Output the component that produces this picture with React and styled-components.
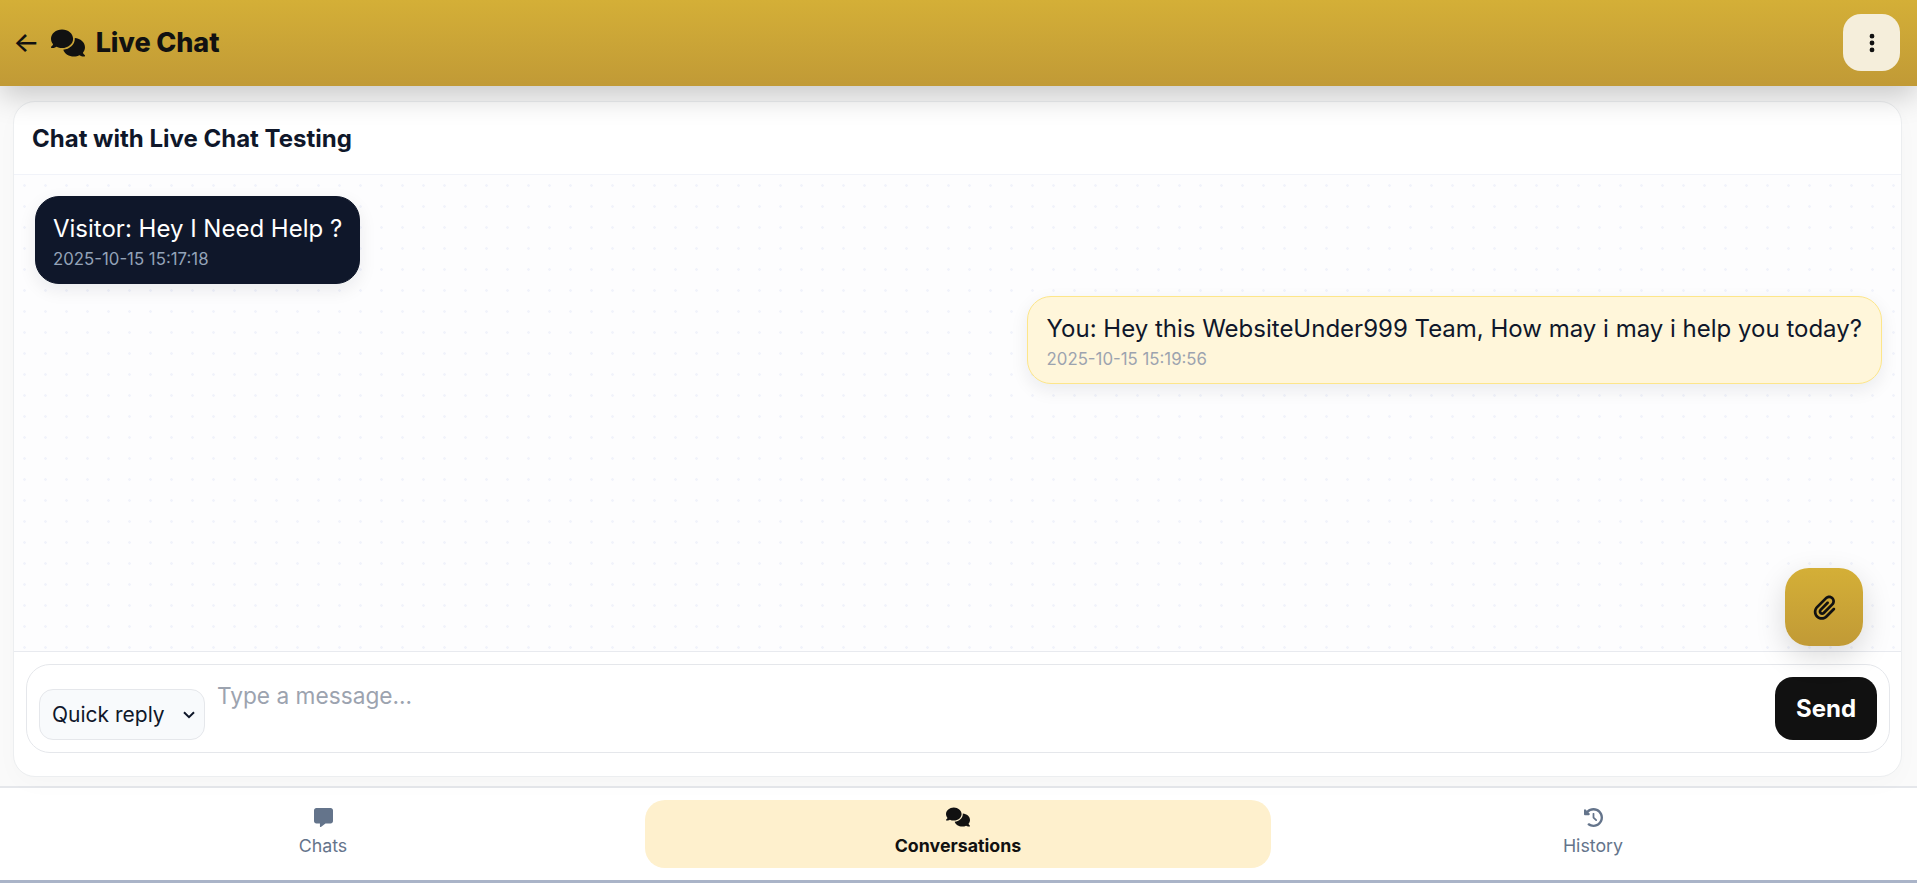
import React from 'react';
import styled, { createGlobalStyle } from 'styled-components';
import { FaComments, FaEllipsisVertical, FaPaperclip, FaMessage, FaClockRotateLeft } from 'react-icons/fa6';

const chevron = encodeURIComponent(
  '<svg xmlns="http://www.w3.org/2000/svg" width="12" height="8" viewBox="0 0 12 8"><path d="M1 1.2l5 5 5-5" fill="none" stroke="#0f172a" stroke-width="2"/></svg>'
);

const GlobalStyle = createGlobalStyle`
  * { box-sizing: border-box; }
  html, body { margin: 0; height: 100%; }
  body {
    background: #fafafa;
    font-family: Inter, "Liberation Sans", sans-serif;
    color: #0f172a;
    overflow: hidden;
  }
`;

const Page = styled.div`
  height: 883px;
  display: flex;
  flex-direction: column;
  border-bottom: 3px solid #aab4c8;
`;

const Header = styled.header`
  position: relative;
  z-index: 2;
  height: 86px;
  flex: none;
  padding: 0 17px 1px 13px;
  display: flex;
  align-items: center;
  justify-content: space-between;
  background: linear-gradient(180deg, #d4af37, #c19a36);
  box-shadow: 0 10px 30px rgba(0, 0, 0, 0.2);
  color: #111111;
`;

const Title = styled.div`
  display: flex;
  align-items: center;
  gap: 11px;
  font-size: 27px;
  font-weight: 800;
  letter-spacing: -0.1px;
`;

const BackArrow = styled.span`
  font-size: 28px;
  font-weight: 500;
  line-height: 1;
  margin-top: -2px;
`;

const MenuButton = styled.button`
  width: 57px;
  height: 57px;
  border: 0;
  border-radius: 18px;
  background: #f5eedb;
  color: #111111;
  font-size: 22px;
  display: flex;
  align-items: center;
  justify-content: center;
`;

const Main = styled.main`
  flex: 1;
  min-height: 0;
  padding: 15px 15px 9px 13px;
`;

const Card = styled.section`
  position: relative;
  height: 100%;
  display: flex;
  flex-direction: column;
  background: #ffffff;
  border: 1px solid #eceef0;
  border-radius: 22px;
  overflow: hidden;
  box-shadow: 0 8px 24px rgba(15, 23, 42, 0.02);
`;

const CardTitle = styled.div`
  height: 73px;
  flex: none;
  padding: 0 18px;
  display: flex;
  align-items: center;
  font-size: 24px;
  font-weight: 700;
  border-bottom: 1px solid #f1f3f9;
`;

const Messages = styled.div`
  flex: 1;
  min-height: 0;
  padding: 21px 19px 0 21px;
  display: flex;
  flex-direction: column;
  gap: 12px;
  background-color: #fdfdfe;
  background-image: radial-gradient(circle, #f1f3fb 1px, transparent 1.6px);
  background-size: 21px 21px;
`;

const Bubble = styled.div`
  align-self: ${(p) => (p.$mine ? 'flex-end' : 'flex-start')};
  padding: 16px ${(p) => (p.$mine ? '19px' : '17px')} 14px;
  border-radius: 24px;
  border: 1px solid ${(p) => (p.$mine ? '#fde68a' : '#0f172a')};
  background: ${(p) => (p.$mine ? '#fff6da' : '#0f172a')};
  color: ${(p) => (p.$mine ? '#0f172a' : '#ffffff')};
  box-shadow: 0 6px 18px rgba(15, 23, 42, 0.08);
`;

const BubbleText = styled.div`
  font-size: 24px;
  line-height: 32px;
`;

const Stamp = styled.div`
  margin-top: 4px;
  font-size: 16.8px;
  line-height: 20px;
  color: ${(p) => (p.$mine ? '#9ca3af' : '#94a3b8')};
`;

const AttachButton = styled.button`
  position: absolute;
  right: 38px;
  bottom: 130px;
  width: 78px;
  height: 78px;
  border: 0;
  border-radius: 24px;
  background: linear-gradient(180deg, #d4af37, #c19a36);
  color: #111111;
  font-size: 25px;
  display: flex;
  align-items: center;
  justify-content: center;
  box-shadow: 0 10px 30px rgba(0, 0, 0, 0.15);
`;

const Composer = styled.div`
  flex: none;
  padding: 12px 11px 23px 12px;
  border-top: 1px solid #e8eaef;
`;

const InputBar = styled.div`
  height: 89px;
  padding: 12px;
  display: flex;
  align-items: center;
  gap: 12px;
  border: 1px solid #e5e7eb;
  border-radius: 24px;
  background: #ffffff;
`;

const QuickReply = styled.select`
  appearance: none;
  width: 166px;
  height: 51px;
  margin-top: 12px;
  padding: 0 24px 0 12px;
  flex: none;
  border: 1px solid #e5e7eb;
  border-radius: 14px;
  background: #f8fafc url("data:image/svg+xml,${chevron}") no-repeat right 9px center;
  color: #0f172a;
  font-family: inherit;
  font-size: 21px;
`;

const MessageInput = styled.textarea`
  flex: 1;
  height: 63px;
  padding: 4px 0 0;
  border: 0;
  outline: 0;
  resize: none;
  background: transparent;
  font-family: inherit;
  font-size: 22.7px;
  line-height: 30px;
  align-self: flex-start;

  &::placeholder {
    color: #9ca3af;
    opacity: 1;
  }
`;

const SendButton = styled.button`
  width: 102px;
  height: 63px;
  flex: none;
  border: 0;
  border-radius: 18px;
  background: #111111;
  color: #ffffff;
  font-family: inherit;
  font-size: 24px;
  font-weight: 700;
`;

const TabBar = styled.nav`
  height: 94px;
  flex: none;
  padding: 12px 11px 12px 10px;
  display: grid;
  grid-template-columns: repeat(3, 1fr);
  gap: 9px;
  background: #ffffff;
  border-top: 2px solid #e5e7eb;
`;

const Tab = styled.div`
  height: 68px;
  padding-bottom: 4px;
  border-radius: 20px;
  display: flex;
  flex-direction: column;
  align-items: center;
  justify-content: center;
  gap: 8px;
  background: ${(p) => (p.$active ? '#fef0cd' : 'transparent')};
  color: ${(p) => (p.$active ? '#111111' : '#64748b')};
  font-size: 17.8px;
  font-weight: ${(p) => (p.$active ? 700 : 400)};
  line-height: 22px;
`;

const TabIcon = styled.span`
  height: 19px;
  display: flex;
  align-items: center;
  justify-content: center;
`;

const App = () => {
  return (
    <Page>
      <GlobalStyle />
      <Header>
        <Title>
          <BackArrow>←</BackArrow>
          <FaComments size={34} />
          Live Chat
        </Title>
        <MenuButton aria-label="Menu">
          <FaEllipsisVertical />
        </MenuButton>
      </Header>
      <Main>
        <Card>
          <CardTitle>Chat with Live Chat Testing</CardTitle>
          <Messages>
            <Bubble>
              <BubbleText>Visitor: Hey I Need Help ?</BubbleText>
              <Stamp>2025-10-15 15:17:18</Stamp>
            </Bubble>
            <Bubble $mine>
              <BubbleText>You: Hey this WebsiteUnder999 Team, How may i may i help you today?</BubbleText>
              <Stamp $mine>2025-10-15 15:19:56</Stamp>
            </Bubble>
          </Messages>
          <AttachButton aria-label="Attach">
            <FaPaperclip />
          </AttachButton>
          <Composer>
            <InputBar>
              <QuickReply defaultValue="">
                <option value="">Quick reply</option>
              </QuickReply>
              <MessageInput placeholder="Type a message..." />
              <SendButton>Send</SendButton>
            </InputBar>
          </Composer>
        </Card>
      </Main>
      <TabBar>
        <Tab>
          <TabIcon>
            <FaMessage size={19} />
          </TabIcon>
          Chats
        </Tab>
        <Tab $active>
          <TabIcon>
            <FaComments size={24} />
          </TabIcon>
          Conversations
        </Tab>
        <Tab>
          <TabIcon>
            <FaClockRotateLeft size={19} />
          </TabIcon>
          History
        </Tab>
      </TabBar>
    </Page>
  );
};

export default App;
